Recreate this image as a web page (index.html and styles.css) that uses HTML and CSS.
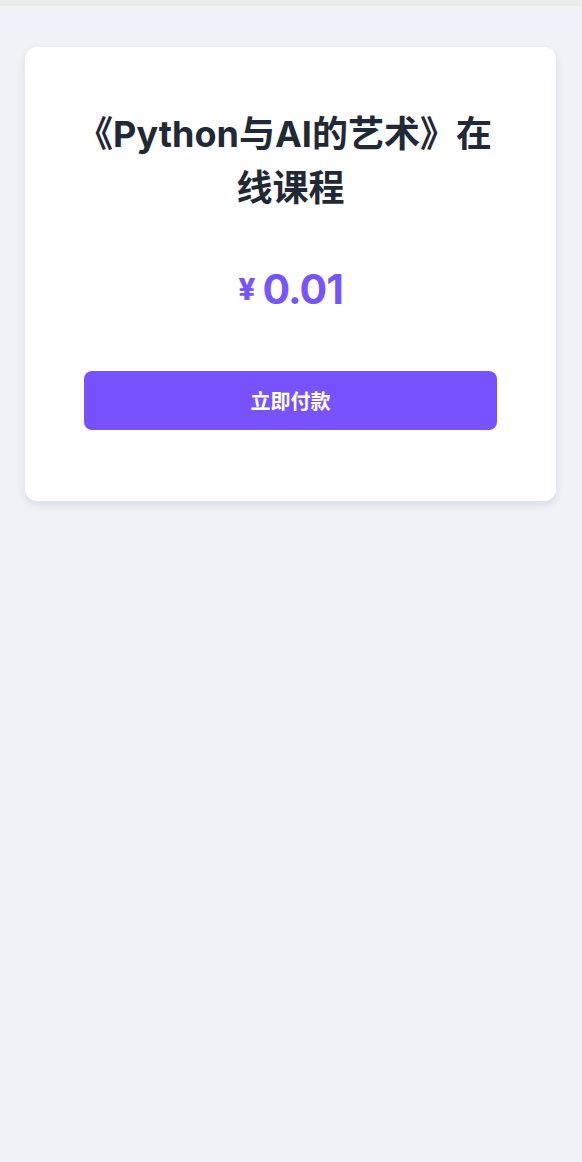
FILE: index.html
```html
<!DOCTYPE html>
<html lang="zh-CN">
<head>
<meta charset="utf-8">
<title>支付</title>
<link rel="stylesheet" href="styles.css">
</head>
<body>
<div class="topbar"></div>
<main class="page">
  <section class="card">
    <h1 class="title">《Python与AI的艺术》在线课程</h1>
    <div class="price"><span class="currency">¥</span><span class="amount">0.01</span></div>
    <button class="pay">立即付款</button>
  </section>
</main>
</body>
</html>
```
FILE: styles.css
```css
html, body {
  margin: 0;
  padding: 0;
}
body {
  background: #f0f2f7;
  font-family: Inter, "Noto Sans CJK SC", sans-serif;
  min-height: 1162px;
}
.topbar {
  height: 6px;
  background: #ecebeb;
}
.page {
  padding: 41px 26px 0 25px;
}
.card {
  background: #ffffff;
  border-radius: 12px;
  box-shadow: 0 4px 10px rgba(30, 41, 70, 0.10);
  padding: 60px 59px 71px;
  display: flex;
  flex-direction: column;
  align-items: center;
}
.title {
  margin: 0 -12px;
  font-size: 36px;
  line-height: 54px;
  font-weight: 700;
  color: #1f2937;
  text-align: center;
  max-width: 437px;
  text-indent: -12px;
}
.price {
  margin-top: 49px;
  display: flex;
  align-items: center;
  gap: 7px;
  color: #7755fe;
  font-weight: 700;
  height: 50px;
}
.currency {
  font-size: 30px;
  font-weight: 800;
  line-height: 30px;
}
.amount {
  font-size: 41px;
  line-height: 50px;
  letter-spacing: -1px;
}
.pay {
  margin-top: 57px;
  width: 100%;
  height: 59px;
  border: none;
  border-radius: 8px;
  background: #7752fe;
  color: #ffffff;
  font-family: Inter, "Noto Sans CJK SC", sans-serif;
  font-size: 20px;
  font-weight: 700;
}
```
